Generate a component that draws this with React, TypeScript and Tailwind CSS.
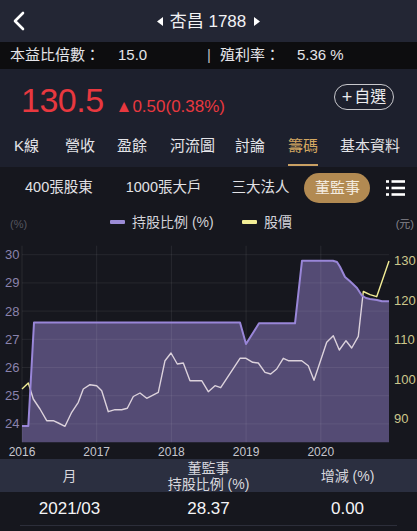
import React from 'react'

const OY = 232

// 持股比例 outline (page coords)
const AREA: [number, number][] = [
  [22, 427], [28.3, 427], [34, 323.5], [240, 323.5], [246, 345], [259, 324.3],
  [295, 324.3], [302, 261.7], [333, 261.7], [337, 263], [340, 267.7], [345, 278],
  [350, 282.3], [357, 289], [362, 296.7], [366, 299], [370, 300], [377, 301],
  [382, 302.3], [389, 302.3],
]

// 股價 line (page coords)
const PRICE: [number, number][] = [
  [22, 390], [28.3, 384], [33.3, 400], [40, 410], [46.7, 421.7], [53.3, 421.7],
  [58.3, 424], [65, 427.3], [71.7, 413.3], [78.3, 403.3], [83.3, 390], [90, 385.7],
  [96.7, 386.7], [101.7, 391.7], [108.3, 412.7], [115, 410.7], [121.7, 410.7],
  [127.3, 409.3], [133.3, 397.5], [140, 394], [146.7, 399.3], [158.3, 393.3],
  [165, 361.7], [171, 354], [177.3, 365], [183.3, 364], [190, 381.7], [201.7, 381.7],
  [208.3, 392.7], [215, 386.7], [220.7, 388.7], [240, 359.3], [246, 359.3],
  [252.7, 363.3], [258.3, 364], [265, 373.3], [270.7, 375], [276.7, 370],
  [283.3, 359.3], [288.3, 361.7], [301.7, 361.7], [308.3, 366.7], [314, 381.3],
  [326.7, 343.3], [333.3, 336.7], [339.3, 351], [346, 341.7], [351.7, 349],
  [358.3, 337.3], [363.3, 292.5], [370, 295.7], [376.7, 297.7], [389, 262],
]

const pts = (arr: [number, number][]) => arr.map(([x, y]) => `${x},${(y - OY).toFixed(1)}`).join(' ')

const X0 = 22
const X1 = 389
const TOP = 246.7 - OY
const BOTTOM = 443.3 - OY
const YEARS = ['2016', '2017', '2018', '2019', '2020']
const yearX = (i: number) => X0 + i * 74.7
const leftY = (v: number) => 255.7 - OY + (30 - v) * 28.2
const rightY = (p: number) => 261.7 - OY + (130 - p) * 3.95

const TABS = [
  { label: 'K線', cls: 'ml-[14px]' },
  { label: '營收', cls: 'ml-[26px]' },
  { label: '盈餘', cls: 'ml-[22px]' },
  { label: '河流圖', cls: 'ml-[23px]' },
  { label: '討論', cls: 'ml-[20px]' },
  { label: '籌碼', cls: 'ml-[23px]', active: true },
  { label: '基本資料', cls: 'ml-[22px]' },
]

function Chart() {
  const areaPoly = `${pts(AREA)} ${X1},${BOTTOM} ${X0},${BOTTOM}`
  const leftTicks = [30, 29, 28, 27, 26, 25, 24]
  const rightTicks = [130, 120, 110, 100, 90]

  return (
    <svg width="417" height="228" className="block">
      <defs>
        <clipPath id="inArea">
          <polygon points={areaPoly} />
        </clipPath>
        <mask id="outArea">
          <rect x="0" y="0" width="417" height="228" fill="white" />
          <polygon points={areaPoly} fill="black" />
        </mask>
      </defs>

      <polygon points={areaPoly} fill="#544b74" />

      {/* grid */}
      {leftTicks.map((v) => (
        <line key={v} x1={X0} x2={X1} y1={leftY(v)} y2={leftY(v)} stroke="white" strokeOpacity="0.07" />
      ))}
      {[0, 1, 2, 3, 4].map((i) => (
        <line key={i} x1={yearX(i)} x2={yearX(i)} y1={TOP} y2={BOTTOM} stroke="white" strokeOpacity="0.08" />
      ))}

      <polyline points={pts(PRICE)} fill="none" stroke="#f2ed96" strokeWidth="1.4" strokeLinejoin="round" mask="url(#outArea)" />
      <polyline points={pts(PRICE)} fill="none" stroke="#dcd2dc" strokeWidth="1.4" strokeLinejoin="round" clipPath="url(#inArea)" />
      <polyline points={pts(AREA)} fill="none" stroke="#9986d8" strokeWidth="2" strokeLinejoin="round" />

      {leftTicks.map((v) => (
        <text key={v} x="5" y={leftY(v) + 4.5} fontSize="13" fill="#8a83ad">{v}</text>
      ))}
      {rightTicks.map((p) => (
        <text key={p} x="394" y={rightY(p) + 4.5} fontSize="13" fill="#cdc88c">{p}</text>
      ))}
      {YEARS.map((yr, i) => (
        <text key={yr} x={yearX(i)} y={457 - OY} fontSize="12" fontWeight="500" fill="#c6c6ce" textAnchor="middle">{yr}</text>
      ))}
    </svg>
  )
}

export default function App() {
  return (
    <div className="min-h-screen w-[417px] bg-[#16171e] font-['Liberation_Sans','Noto_Sans_CJK_TC',sans-serif] text-white">
      {/* Header */}
      <div className="relative flex h-[42px] items-center justify-center bg-[#232634]">
        <svg className="absolute left-[12px] top-[11px]" width="14" height="20" viewBox="0 0 14 20">
          <path d="M11 2 L3 10 L11 18" fill="none" stroke="white" strokeWidth="2.6" strokeLinecap="round" strokeLinejoin="round" />
        </svg>
        <div className="flex items-center text-[17px] leading-none text-[#f2f2f4]">
          <svg width="6" height="9" viewBox="0 0 6 9" className="mr-[7px]"><path d="M6 0 L0 4.5 L6 9 Z" fill="white" /></svg>
          <span>杏昌 1788</span>
          <svg width="6" height="9" viewBox="0 0 6 9" className="ml-[8px]"><path d="M0 0 L6 4.5 L0 9 Z" fill="white" /></svg>
        </div>
      </div>

      {/* Ratios */}
      <div className="flex h-[27px] items-center bg-[#0d0d0f] pl-[10px] text-[15px] text-[#e4e4e8]">
        <div className="flex w-[197px]">
          <span>本益比倍數：</span>
          <span className="ml-[18px]">15.0</span>
        </div>
        <span className="mr-[9px] text-[#bdbdc2]">|</span>
        <span>殖利率：</span>
        <span className="ml-[17px]">5.36 %</span>
      </div>

      {/* Price */}
      <div className="flex h-[56px] items-center bg-[#1d202d] pl-[21px] pr-[23px]">
        <div className="flex items-baseline pt-[6px] text-[#e8383f]">
          <span className="text-[34px] leading-none tracking-[-0.5px]">130.5</span>
          <span className="ml-[12px] text-[17px] leading-none">▲0.50(0.38%)</span>
        </div>
        <button className="ml-auto flex h-[26px] w-[60px] items-center justify-center rounded-full border border-[#c8c8cc] text-[16px] leading-none text-[#ececee]">
          <span className="mr-[2px] text-[18px] font-light">+</span>自選
        </button>
      </div>

      {/* Tabs */}
      <div className="flex h-[42px] items-stretch bg-[#1d202d] text-[15px] text-[#e4e4e8]">
        {TABS.map((t) => (
          <div key={t.label} className={`relative flex items-center ${t.cls} ${t.active ? 'text-[#d4a862]' : ''}`}>
            {t.label}
            {t.active && <div className="absolute bottom-[1px] left-0 right-0 h-[2px] bg-[#c9a063]" />}
          </div>
        ))}
      </div>

      {/* Sub tabs */}
      <div className="flex h-[42px] items-center text-[14.5px] text-[#e2e2e6]">
        <span className="ml-[25px]">400張股東</span>
        <span className="ml-[33px]">1000張大戶</span>
        <span className="ml-[30px]">三大法人</span>
        <span className="ml-[15px] flex h-[30px] w-[66px] items-center justify-center rounded-full bg-[#b28a52] text-[15px] text-[#f4ece0]">董監事</span>
        <svg className="ml-[16px]" width="19" height="16" viewBox="0 0 19 16">
          {[1.5, 8, 14.5].map((y) => (
            <g key={y}>
              <rect x="0" y={y - 1.3} width="3" height="2.6" fill="white" />
              <rect x="5.5" y={y - 1.3} width="13.5" height="2.6" fill="white" />
            </g>
          ))}
        </svg>
      </div>

      {/* Legend + axis units */}
      <div className="flex h-[22px] pl-[10px] pr-[3px]">
        <span className="w-[100px] self-end text-[11px] leading-[13px] text-[#55565f]">(%)</span>
        <div className="flex pt-[3px] text-[14px] leading-none text-[#d2d2d8]">
          <div className="flex w-[132px] items-center">
            <span className="h-[4px] w-[15px] rounded-[1px] bg-[#9b8bd6]" />
            <span className="ml-[7px]">持股比例 (%)</span>
          </div>
          <div className="flex items-center">
            <span className="h-[4px] w-[15px] rounded-[1px] bg-[#f2ed96]" />
            <span className="ml-[7px]">股價</span>
          </div>
        </div>
        <span className="ml-auto self-end text-[11px] leading-[13px] text-[#85858c]">(元)</span>
      </div>

      <Chart />

      {/* Table */}
      <div className="grid h-[33px] grid-cols-3 items-center bg-[#2b2f40] text-center text-[14px] leading-[16px] text-[#d8d8de]">
        <div>月</div>
        <div>董監事<br />持股比例 (%)</div>
        <div>增減 (%)</div>
      </div>
      <div className="grid h-[33px] grid-cols-3 items-center text-center text-[17px] text-[#f4f4f6]">
        <div>2021/03</div>
        <div>28.37</div>
        <div>0.00</div>
      </div>
      <div className="mx-[20px] h-[1px] bg-[#2c2e3a]" />
    </div>
  )
}
